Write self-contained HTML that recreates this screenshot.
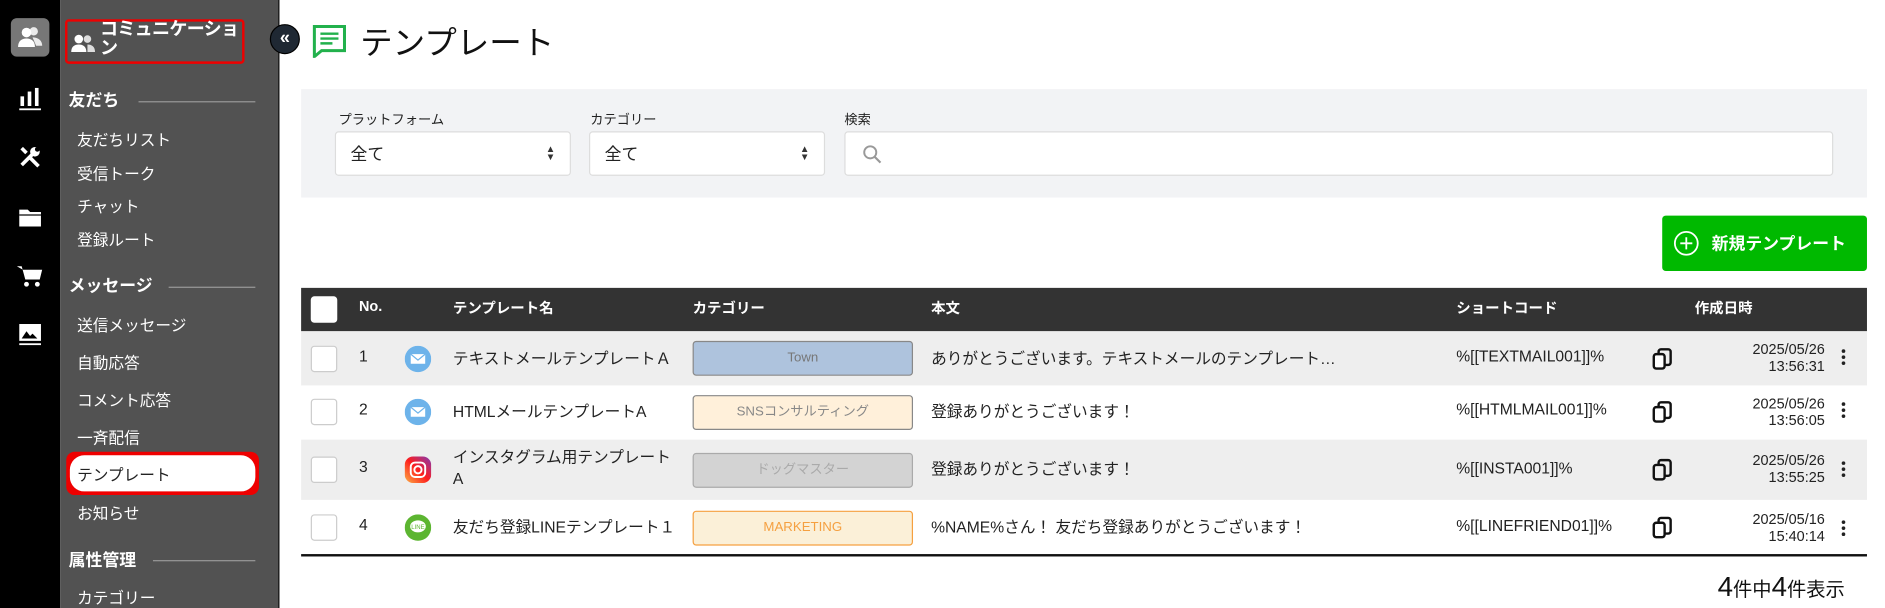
<!DOCTYPE html>
<html><head><meta charset="utf-8"><style>
*{box-sizing:border-box;margin:0;padding:0}
html,body{width:1885px;height:608px;overflow:hidden;background:#fff}
body{font-family:"Liberation Sans","Noto Sans CJK JP",sans-serif;color:#222}
#s{position:absolute;left:0;top:0;width:1565px;height:505px;transform:scale(1.2045);transform-origin:0 0}
.a{position:absolute}
.ib{left:0;top:0;width:50px;height:505px;background:#000}
.sb{left:50px;top:0;width:182px;height:505px;background:#525252;border-right:1px solid #111}
.si{position:absolute;left:64px;color:#fff;font-size:13px}
.sh{position:absolute;left:57px;color:#fff;font-size:14px;font-weight:bold}
.sl{position:absolute;height:1px;background:#999}
.lbl{font-size:11px;color:#222}
.sel{background:#fff;border:1px solid #ddd;border-radius:3px;height:37px;font-size:14px;padding:8px 12px}
.th{font-size:12px;font-weight:bold;color:#fff;top:247px}
.cb{position:absolute;left:258px;width:22px;height:22px;background:#fff;border:1px solid #ccc;border-radius:3px}
.row{position:absolute;left:250px;width:1300px}
.c{position:absolute;font-size:13px;color:#222}
.bd{position:absolute;left:575px;width:183px;height:29px;border:1px solid #888;border-radius:3px;font-size:11px;text-align:center;line-height:27px}
.dt{position:absolute;width:90px;text-align:right;font-size:12px;line-height:14px}
.dots{position:absolute;left:1529px;width:4px}
.dots i{display:block;width:3px;height:3px;background:#222;border-radius:50%;margin:0 0 2px}
</style></head><body><div id="s">
<div class="a ib"></div>
<div class="a" style="left:9px;top:15px;width:32px;height:32px;background:#777;border-radius:5px"></div>
<svg class="a" style="left:14px;top:20px" width="22" height="22" viewBox="0 0 22 22"><circle cx="8" cy="7" r="4" fill="#fff"/><path d="M1 19c0-5 3-7 7-7s7 2 7 7z" fill="#fff"/><circle cx="14" cy="6" r="3.5" fill="#fff" opacity=".85"/><path d="M13 11c4 0 8 2 8 7h-5" fill="#fff" opacity=".85"/></svg>
<svg class="a" style="left:15px;top:70px" width="20" height="22" viewBox="0 0 20 22"><rect x="2" y="10" width="3" height="8" fill="#fff"/><rect x="8" y="6" width="3" height="12" fill="#fff"/><rect x="14" y="3" width="3" height="15" fill="#fff"/><rect x="1" y="20" width="18" height="1.5" fill="#fff"/></svg>
<svg class="a" style="left:15px;top:120px" width="20" height="20" viewBox="0 0 20 20"><path d="M3 17L12 8" stroke="#fff" stroke-width="3"/><circle cx="14" cy="6" r="4" fill="#fff"/><circle cx="16" cy="4" r="2" fill="#000"/><path d="M3 3l4 4M9 10l8 8" stroke="#fff" stroke-width="3"/></svg>
<svg class="a" style="left:15px;top:171px" width="20" height="18" viewBox="0 0 20 18"><path d="M1 3h7l2 2h9v12H1z" fill="#fff"/><rect x="1" y="7" width="18" height="1" fill="#000"/></svg>
<svg class="a" style="left:13px;top:219px" width="24" height="20" viewBox="0 0 24 20"><path d="M1 2h4l3 11h12l2-8H6" fill="#fff"/><circle cx="9" cy="17" r="2" fill="#fff"/><circle cx="18" cy="17" r="2" fill="#fff"/></svg>
<svg class="a" style="left:15px;top:268px" width="20" height="20" viewBox="0 0 20 20"><rect x="1" y="1" width="18" height="14" fill="#fff"/><path d="M3 13l4-6 3 4 2-2 4 4z" fill="#000"/><rect x="1" y="17" width="18" height="1.5" fill="#fff"/></svg>
<div class="a sb"></div>
<div class="a" style="left:54px;top:16px;width:149px;height:37px;border:2px solid #e00;border-radius:3px"></div>
<svg class="a" style="left:59px;top:27px" width="20" height="18" viewBox="0 0 22 20"><circle cx="7" cy="6" r="4" fill="#fff"/><path d="M0 18c0-5 3-7 7-7s7 2 7 7z" fill="#fff"/><circle cx="15" cy="6" r="3.5" fill="#ddd"/><path d="M15 11c4 0 7 2 7 7h-7" fill="#ddd"/></svg>
<div class="a" style="left:83px;top:17px;color:#fff;font-size:15px;font-weight:bold;line-height:16px;width:124px;letter-spacing:-0.6px">コミュニケーション</div>
<div class="sh" style="top:73px">友だち</div><div class="sl" style="left:115px;top:84px;width:97px"></div>
<div class="si" style="top:106px">友だちリスト</div>
<div class="si" style="top:134px">受信トーク</div>
<div class="si" style="top:161px">チャット</div>
<div class="si" style="top:189px">登録ルート</div>
<div class="sh" style="top:227px">メッセージ</div><div class="sl" style="left:140px;top:238px;width:72px"></div>
<div class="si" style="top:260px">送信メッセージ</div>
<div class="si" style="top:291px">自動応答</div>
<div class="si" style="top:322px">コメント応答</div>
<div class="si" style="top:353px">一斉配信</div>
<div class="a" style="left:55px;top:375px;width:160px;height:36px;border:2px solid #e00;border-radius:7px;background:#e00"></div>
<div class="a" style="left:58px;top:378px;width:154px;height:30px;border-radius:12px;background:#fff"></div>
<div class="si" style="top:384px;color:#222">テンプレート</div>
<div class="si" style="top:416px">お知らせ</div>
<div class="sh" style="top:455px">属性管理</div><div class="sl" style="left:127px;top:465px;width:85px"></div>
<div class="si" style="top:486px">カテゴリー</div>
<div class="a" style="left:224px;top:20px;width:25px;height:25px;border-radius:50%;background:#1f2833;border:1px solid #000;color:#fff;font-size:15px;font-weight:bold;text-align:center;line-height:22px">«</div>
<svg class="a" style="left:259px;top:20px" width="29" height="28" viewBox="0 0 29 28"><path d="M2 2h25v20H8l-6 5z" fill="none" stroke="#22b14c" stroke-width="2.5"/><path d="M7 8h15M7 12h15M7 16h10" stroke="#22b14c" stroke-width="2"/></svg>
<div class="a" style="left:299px;top:14px;font-size:27px;color:#111">テンプレート</div>
<div class="a" style="left:250px;top:74px;width:1300px;height:90px;background:#f2f3f5"></div>
<div class="a lbl" style="left:281px;top:91px">プラットフォーム</div>
<div class="a lbl" style="left:490px;top:91px">カテゴリー</div>
<div class="a lbl" style="left:701px;top:91px">検索</div>
<div class="a sel" style="left:278px;top:109px;width:196px">全て<span style="position:absolute;right:12px;top:10px;font-size:8px;line-height:7px;color:#333">▲<br>▼</span></div>
<div class="a sel" style="left:489px;top:109px;width:196px">全て<span style="position:absolute;right:12px;top:10px;font-size:8px;line-height:7px;color:#333">▲<br>▼</span></div>
<div class="a sel" style="left:701px;top:109px;width:821px"><svg width="16" height="16" viewBox="0 0 16 16" style="position:absolute;left:14px;top:10px"><circle cx="6.5" cy="6.5" r="5" fill="none" stroke="#999" stroke-width="1.6"/><path d="M10 10l5 5" stroke="#999" stroke-width="1.8"/></svg></div>
<div class="a" style="left:1380px;top:179px;width:170px;height:46px;background:#00b900;border-radius:3px"></div>
<svg class="a" style="left:1389px;top:191px" width="22" height="22" viewBox="0 0 22 22"><circle cx="11" cy="11" r="9.5" fill="none" stroke="#fff" stroke-width="1.5"/><path d="M11 6v10M6 11h10" stroke="#fff" stroke-width="1.5"/></svg>
<div class="a" style="left:1421px;top:192px;color:#fff;font-weight:bold;font-size:14px">新規テンプレート</div>
<div class="a" style="left:250px;top:239px;width:1300px;height:36px;background:#333"></div>
<div class="cb" style="top:246px;border:none"></div>
<div class="a th" style="left:298px">No.</div>
<div class="a th" style="left:376px">テンプレート名</div>
<div class="a th" style="left:575px">カテゴリー</div>
<div class="a th" style="left:773px">本文</div>
<div class="a th" style="left:1209px">ショートコード</div>
<div class="a th" style="left:1407px">作成日時</div>
<div class="row" style="top:275px;height:45px;background:#eee"></div>
<div class="row" style="top:365px;height:50px;background:#eee"></div>
<div class="row" style="top:460px;height:1.5px;background:#111"></div>

<div class="cb" style="top:287px"></div><div class="c" style="left:298px;top:288px">1</div>
<svg class="a" style="left:336px;top:287px" width="22" height="22"><circle cx="11" cy="11" r="11" fill="#6db3ea"/><rect x="5" y="7" width="12" height="8" fill="#fff"/><path d="M5 7l6 5 6-5" stroke="#6db3ea" fill="none"/></svg>
<div class="c" style="left:376px;top:287px">テキストメールテンプレートＡ</div>
<div class="bd" style="top:283px;background:#aec3dd;color:#777">Town</div>
<div class="c" style="left:773px;top:287px">ありがとうございます。テキストメールのテンプレート…</div>
<div class="c" style="left:1209px;top:288px">%[[TEXTMAIL001]]%</div>

<div class="cb" style="top:331px"></div><div class="c" style="left:298px;top:332px">2</div>
<svg class="a" style="left:336px;top:331px" width="22" height="22"><circle cx="11" cy="11" r="11" fill="#6db3ea"/><rect x="5" y="7" width="12" height="8" fill="#fff"/><path d="M5 7l6 5 6-5" stroke="#6db3ea" fill="none"/></svg>
<div class="c" style="left:376px;top:331px">HTMLメールテンプレートA</div>
<div class="bd" style="top:328px;background:#fff0da;color:#888">SNSコンサルティング</div>
<div class="c" style="left:773px;top:331px">登録ありがとうございます！</div>
<div class="c" style="left:1209px;top:332px">%[[HTMLMAIL001]]%</div>

<div class="cb" style="top:379px"></div><div class="c" style="left:298px;top:380px">3</div>
<svg class="a" style="left:336px;top:379px" width="22" height="22"><defs><linearGradient id="g" x1="0" y1="1" x2="1" y2="0"><stop offset="0" stop-color="#fcb045"/><stop offset=".5" stop-color="#fd1d1d"/><stop offset="1" stop-color="#833ab4"/></linearGradient></defs><rect width="22" height="22" rx="7" fill="url(#g)"/><rect x="5" y="5" width="12" height="12" rx="3.5" fill="none" stroke="#fff" stroke-width="1.6"/><circle cx="11" cy="11" r="3" fill="none" stroke="#fff" stroke-width="1.6"/></svg>
<div class="c" style="left:376px;top:371px;line-height:18px">インスタグラム用テンプレート<br>A</div>
<div class="bd" style="top:376px;background:#d3d3d3;color:#aaa;border-color:#aaa">ドッグマスター</div>
<div class="c" style="left:773px;top:379px">登録ありがとうございます！</div>
<div class="c" style="left:1209px;top:381px">%[[INSTA001]]%</div>

<div class="cb" style="top:427px"></div><div class="c" style="left:298px;top:428px">4</div>
<svg class="a" style="left:336px;top:427px" width="22" height="22"><circle cx="11" cy="11" r="11" fill="#5cb531"/><ellipse cx="11" cy="10" rx="6.5" ry="5" fill="#fff"/><text x="11" y="12" font-size="5" text-anchor="middle" fill="#5cb531" font-family="Liberation Sans">LINE</text></svg>
<div class="c" style="left:376px;top:427px">友だち登録LINEテンプレート１</div>
<div class="bd" style="top:424px;background:#fbf0d8;color:#f5a040;border-color:#f5a040">MARKETING</div>
<div class="c" style="left:773px;top:427px">%NAME%さん！ 友だち登録ありがとうございます！</div>
<div class="c" style="left:1209px;top:429px">%[[LINEFRIEND01]]%</div>

<svg class="a" style="left:1371px;top:288px" width="18" height="20" viewBox="0 0 18 20"><rect x="6" y="2" width="10" height="13" rx="2" fill="none" stroke="#111" stroke-width="2"/><rect x="2" y="6" width="9" height="12" rx="2" fill="#fff" stroke="#111" stroke-width="2"/></svg>
<svg class="a" style="left:1371px;top:332px" width="18" height="20" viewBox="0 0 18 20"><rect x="6" y="2" width="10" height="13" rx="2" fill="none" stroke="#111" stroke-width="2"/><rect x="2" y="6" width="9" height="12" rx="2" fill="#fff" stroke="#111" stroke-width="2"/></svg>
<svg class="a" style="left:1371px;top:380px" width="18" height="20" viewBox="0 0 18 20"><rect x="6" y="2" width="10" height="13" rx="2" fill="none" stroke="#111" stroke-width="2"/><rect x="2" y="6" width="9" height="12" rx="2" fill="#eee" stroke="#111" stroke-width="2"/></svg>
<svg class="a" style="left:1371px;top:428px" width="18" height="20" viewBox="0 0 18 20"><rect x="6" y="2" width="10" height="13" rx="2" fill="none" stroke="#111" stroke-width="2"/><rect x="2" y="6" width="9" height="12" rx="2" fill="#fff" stroke="#111" stroke-width="2"/></svg>

<div class="dt" style="left:1425px;top:283px">2025/05/26<br>13:56:31</div>
<div class="dt" style="left:1425px;top:328px">2025/05/26<br>13:56:05</div>
<div class="dt" style="left:1425px;top:375px">2025/05/26<br>13:55:25</div>
<div class="dt" style="left:1425px;top:424px">2025/05/16<br>15:40:14</div>
<div class="dots" style="top:290px"><i></i><i></i><i></i></div>
<div class="dots" style="top:334px"><i></i><i></i><i></i></div>
<div class="dots" style="top:383px"><i></i><i></i><i></i></div>
<div class="dots" style="top:432px"><i></i><i></i><i></i></div>
<div class="a" style="left:1426px;top:474px;font-size:16px;color:#111;white-space:nowrap"><span style="font-size:23px">4</span>件中<span style="font-size:23px">4</span>件表示</div>
</div></body></html>
